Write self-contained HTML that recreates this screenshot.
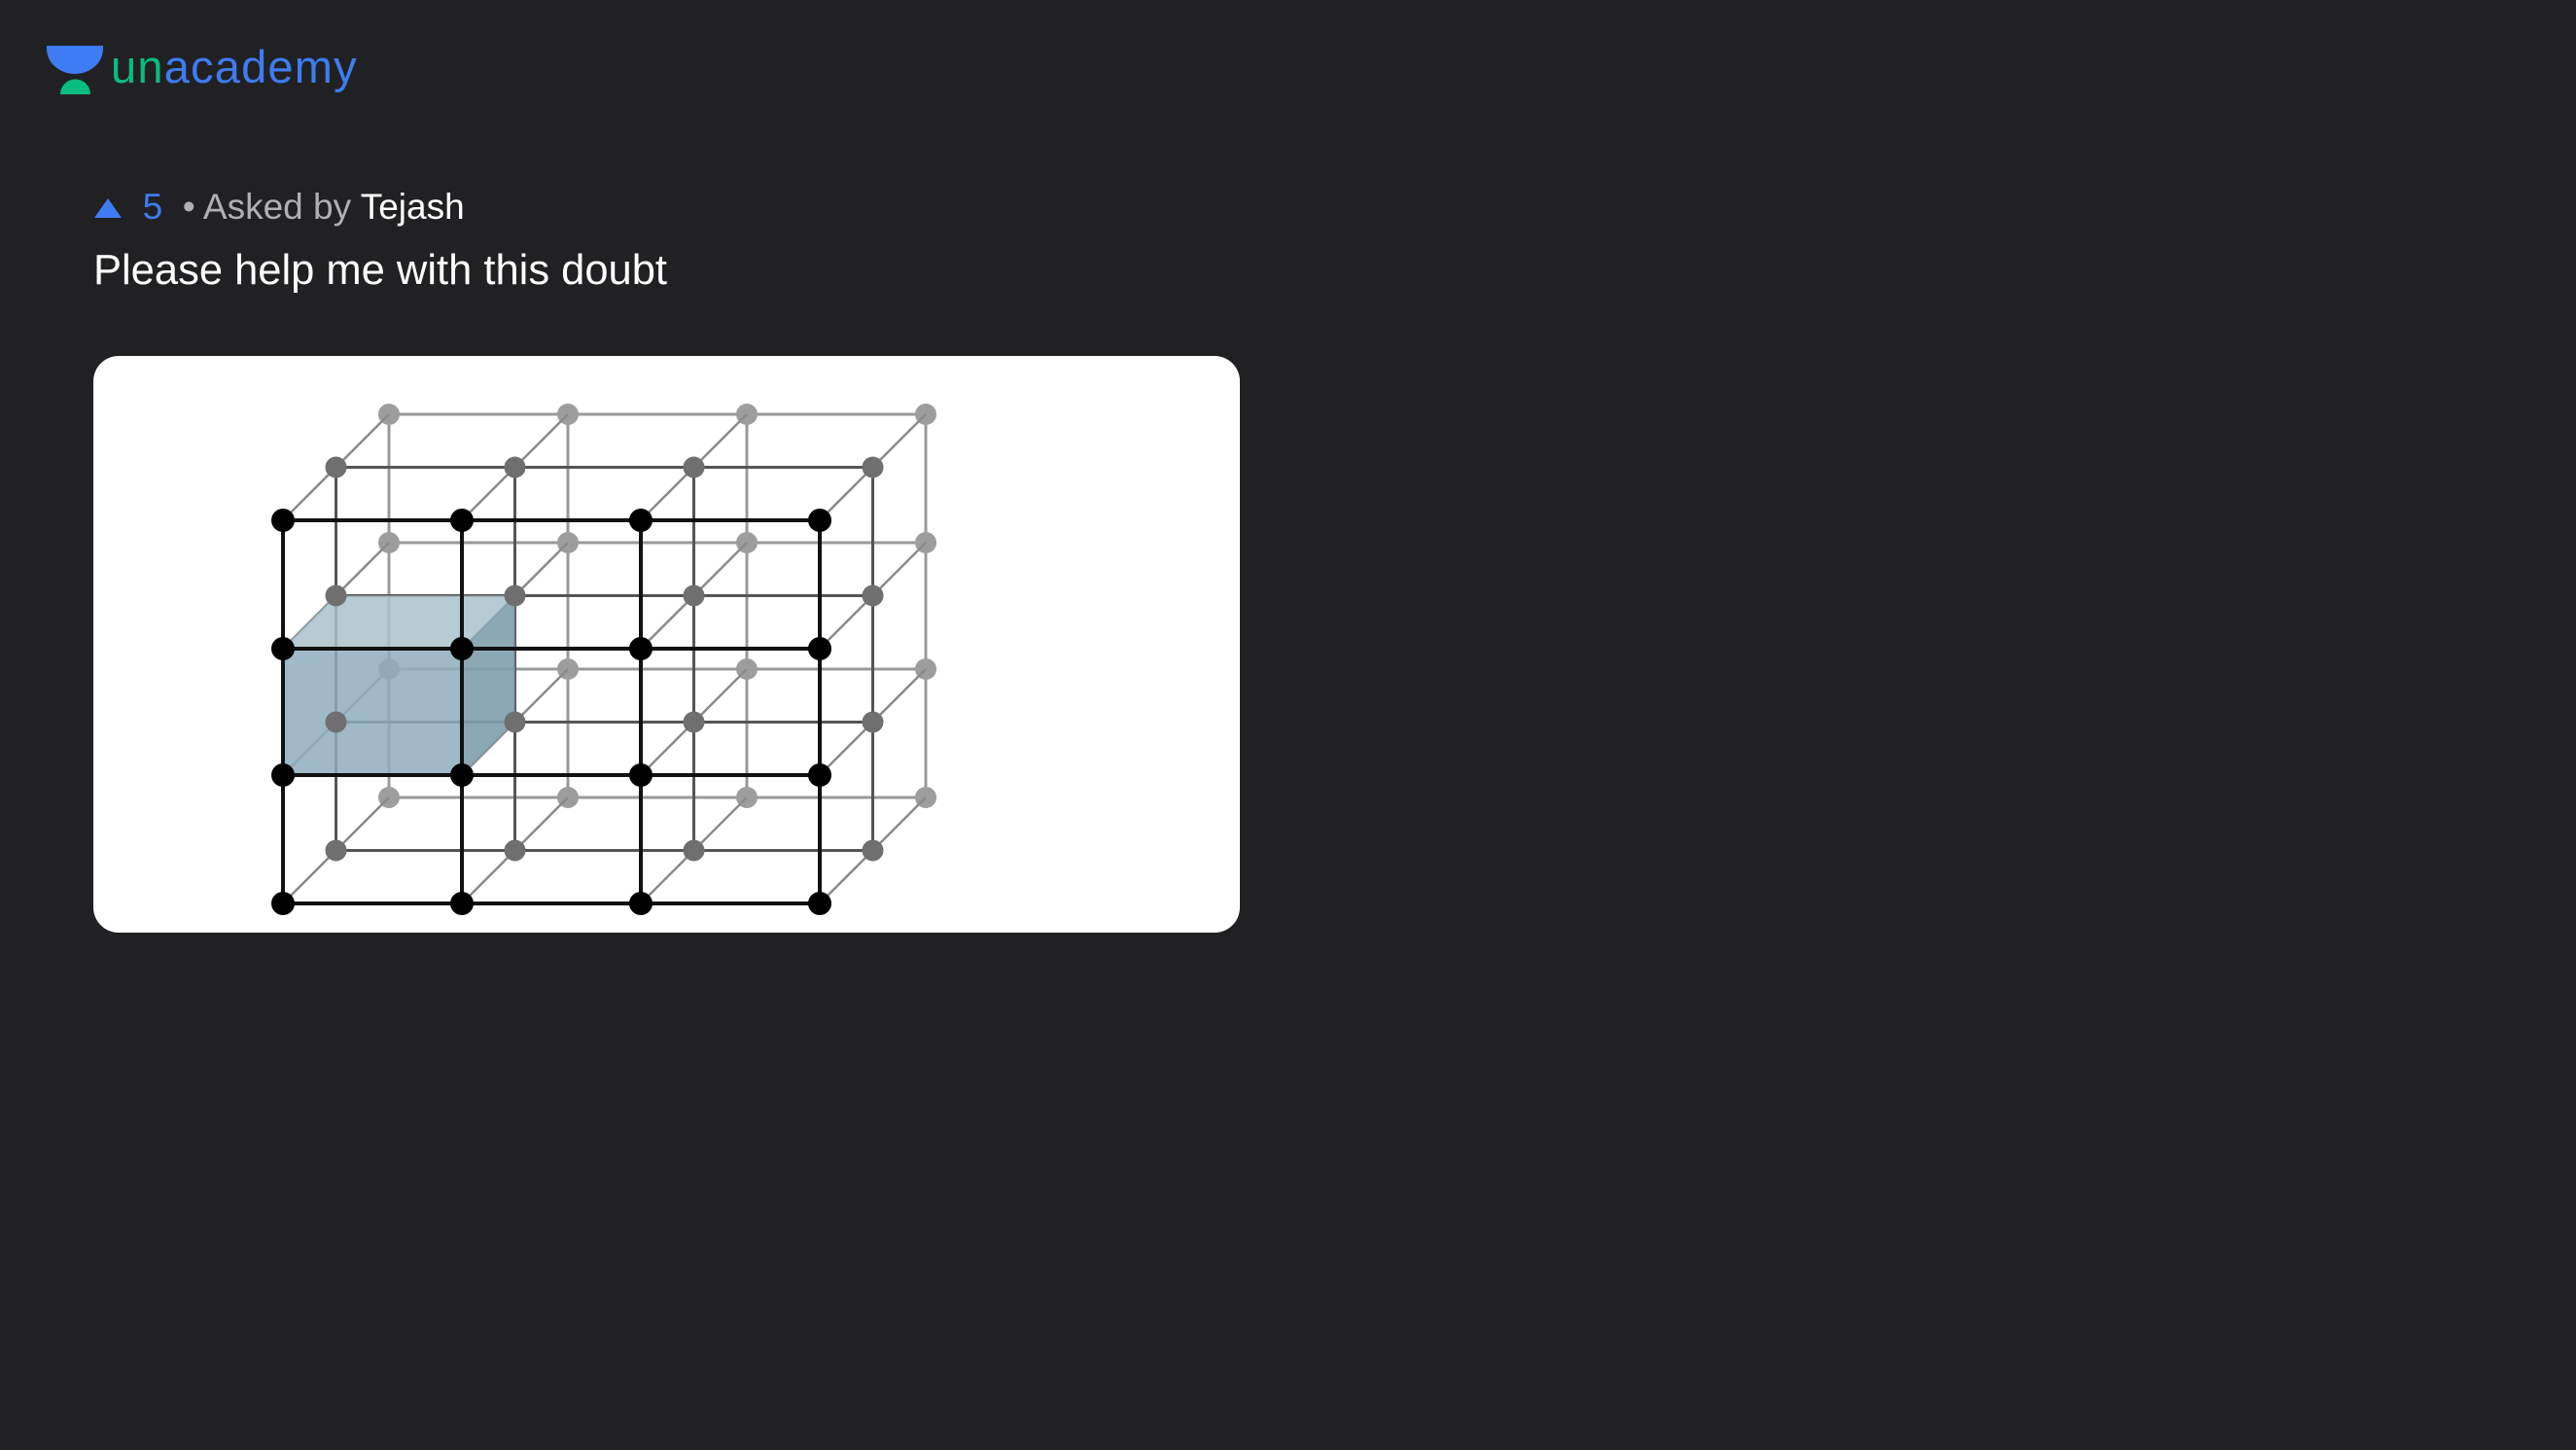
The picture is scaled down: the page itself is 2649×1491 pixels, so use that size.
<!DOCTYPE html>
<html><head><meta charset="utf-8"><style>
html,body{margin:0;padding:0;background:#212123;width:2649px;height:1491px;overflow:hidden;font-family:"Liberation Sans",sans-serif}
.logo{position:absolute;left:47px;top:40px}
.logotext{position:absolute;left:114px;top:41px;font-size:47px;letter-spacing:1.2px}
.meta{position:absolute;left:96px;top:192px;font-size:37px;color:#b0b0b2;white-space:nowrap}
.q{position:absolute;left:96px;top:254px;font-size:43.5px;color:#fff;white-space:nowrap}
.card{position:absolute;left:96px;top:366px;width:1179px;height:593px;background:#fff;border-radius:26px;overflow:hidden}
</style></head><body>
<svg class="logo" width="62" height="60" viewBox="0 0 62 60">
<path d="M1 7 H59 V10 A29 26 0 0 1 1 10 Z" fill="#3d7cf2"/>
<path d="M15 57 A15.5 15.5 0 0 1 46 57 Z" fill="#08bd80"/>
</svg>
<div class="logotext"><span style="color:#08bd80">un</span><span style="color:#3d7cf2">academy</span></div>
<div class="meta"><svg width="30" height="24" viewBox="0 0 30 24" style="vertical-align:-1px"><path d="M15 2 L29 22 H1 Z" fill="#3d7cf2"/></svg>&nbsp; <span style="color:#3d7cf2">5</span>&nbsp; • Asked by <span style="color:#fff">Tejash</span></div>
<div class="q">Please help me with this doubt</div>
<div class="card"><svg id="s" width="1179" height="593" viewBox="96 366 1179 593"></svg></div>
<script>
var xs=[291,475,659,843],ys=[535,667,797,929],d=[0,54.5,109],cols=["#000","#6f6f6f","#9d9d9d"],lc=["#111","#555","#999"];
var o="";
function L(a,b,c,e,col,w){o+='<line x1="'+a+'" y1="'+b+'" x2="'+c+'" y2="'+e+'" stroke="'+col+'" stroke-width="'+w+'"/>';}
for(var k=2;k>=0;k--){var dd=d[k];
 for(var j=0;j<4;j++)L(xs[0]+dd,ys[j]-dd,xs[3]+dd,ys[j]-dd,lc[k],k==0?4:3);
 for(var i=0;i<4;i++)L(xs[i]+dd,ys[0]-dd,xs[i]+dd,ys[3]-dd,lc[k],k==0?4:3);
 if(k==1){for(var i=0;i<4;i++)for(var j=0;j<4;j++)L(xs[i],ys[j],xs[i]+d[2],ys[j]-d[2],"#8a8a8a",2.5);
  var x0=291,x1=475,y0=667,y1=797,c=54.5;
  o+='<polygon points="'+x0+','+y0+' '+(x0+c)+','+(y0-c)+' '+(x1+c)+','+(y0-c)+' '+x1+','+y0+'" fill="#a9c2cd" opacity="0.85"/>';
  o+='<polygon points="'+x1+','+y0+' '+(x1+c)+','+(y0-c)+' '+(x1+c)+','+(y1-c)+' '+x1+','+y1+'" fill="#7f9fad" opacity="0.9"/>';
  o+='<rect x="'+x0+'" y="'+y0+'" width="'+(x1-x0)+'" height="'+(y1-y0)+'" fill="#8eaebc" opacity="0.85"/>';
 }
 for(var i=0;i<4;i++)for(var j=0;j<4;j++)o+='<circle cx="'+(xs[i]+dd)+'" cy="'+(ys[j]-dd)+'" r="'+(k==0?12:11)+'" fill="'+cols[k]+'"/>';
}
document.getElementById("s").innerHTML=o;
</script>
</body></html>
